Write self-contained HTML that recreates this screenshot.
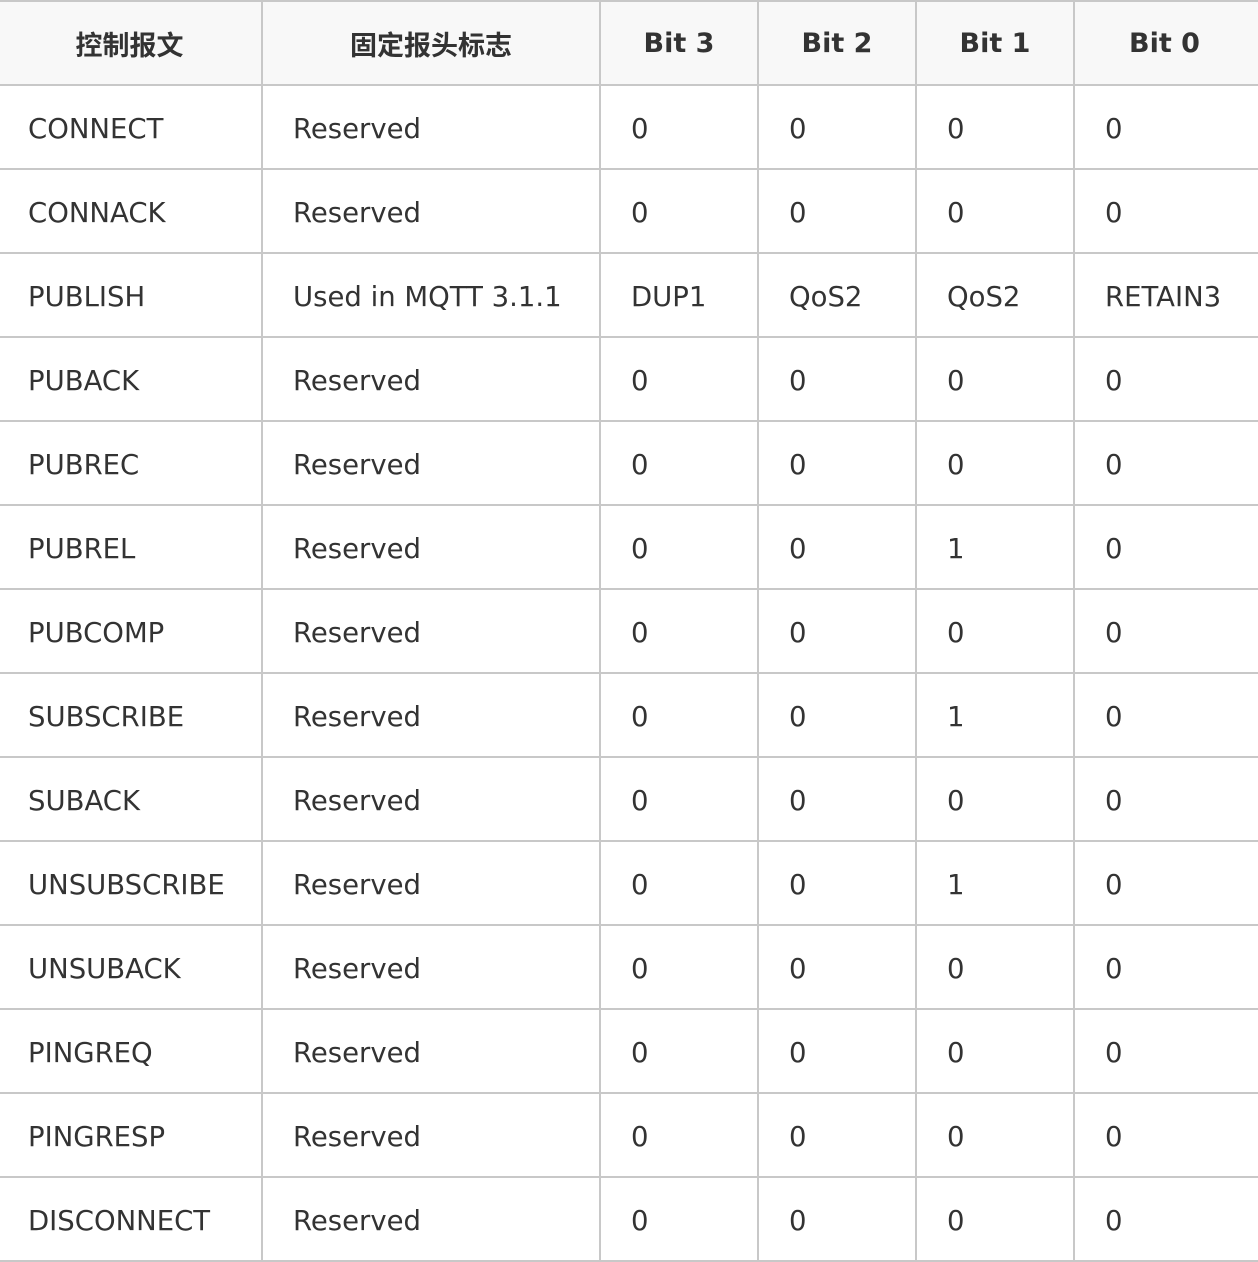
<!DOCTYPE html>
<html><head><meta charset="utf-8"><style>
html,body{margin:0;padding:0;background:#fff;width:1258px;height:1260px;overflow:hidden}
table{position:absolute;left:-4px;top:0;width:1270px;border-collapse:collapse;table-layout:fixed;font-family:"DejaVu Sans","Noto Sans CJK SC",sans-serif;font-size:27.5px;color:#333}
td,th{border:2px solid #c8c8c8;height:84px;padding:3px 0 0 30px;text-align:left;white-space:nowrap;box-sizing:border-box}
th{background:#f8f8f8;text-align:center;padding:0;font-weight:bold;color:#333;font-size:27px}
th.c{font-family:"Noto Sans CJK SC","DejaVu Sans",sans-serif;font-size:27px}
</style></head><body>
<table>
<colgroup><col style="width:265px"><col style="width:338px"><col style="width:158px"><col style="width:158px"><col style="width:158px"><col style="width:193px"></colgroup>
<tr><th class="c">控制报文</th><th class="c">固定报头标志</th><th>Bit 3</th><th>Bit 2</th><th>Bit 1</th><th style="padding-right:12px">Bit 0</th></tr>
<tr><td>CONNECT</td><td>Reserved</td><td>0</td><td>0</td><td>0</td><td>0</td></tr>
<tr><td>CONNACK</td><td>Reserved</td><td>0</td><td>0</td><td>0</td><td>0</td></tr>
<tr><td>PUBLISH</td><td>Used in MQTT 3.1.1</td><td>DUP1</td><td>QoS2</td><td>QoS2</td><td>RETAIN3</td></tr>
<tr><td>PUBACK</td><td>Reserved</td><td>0</td><td>0</td><td>0</td><td>0</td></tr>
<tr><td>PUBREC</td><td>Reserved</td><td>0</td><td>0</td><td>0</td><td>0</td></tr>
<tr><td>PUBREL</td><td>Reserved</td><td>0</td><td>0</td><td>1</td><td>0</td></tr>
<tr><td>PUBCOMP</td><td>Reserved</td><td>0</td><td>0</td><td>0</td><td>0</td></tr>
<tr><td>SUBSCRIBE</td><td>Reserved</td><td>0</td><td>0</td><td>1</td><td>0</td></tr>
<tr><td>SUBACK</td><td>Reserved</td><td>0</td><td>0</td><td>0</td><td>0</td></tr>
<tr><td>UNSUBSCRIBE</td><td>Reserved</td><td>0</td><td>0</td><td>1</td><td>0</td></tr>
<tr><td>UNSUBACK</td><td>Reserved</td><td>0</td><td>0</td><td>0</td><td>0</td></tr>
<tr><td>PINGREQ</td><td>Reserved</td><td>0</td><td>0</td><td>0</td><td>0</td></tr>
<tr><td>PINGRESP</td><td>Reserved</td><td>0</td><td>0</td><td>0</td><td>0</td></tr>
<tr><td>DISCONNECT</td><td>Reserved</td><td>0</td><td>0</td><td>0</td><td>0</td></tr>
</table>
</body></html>
